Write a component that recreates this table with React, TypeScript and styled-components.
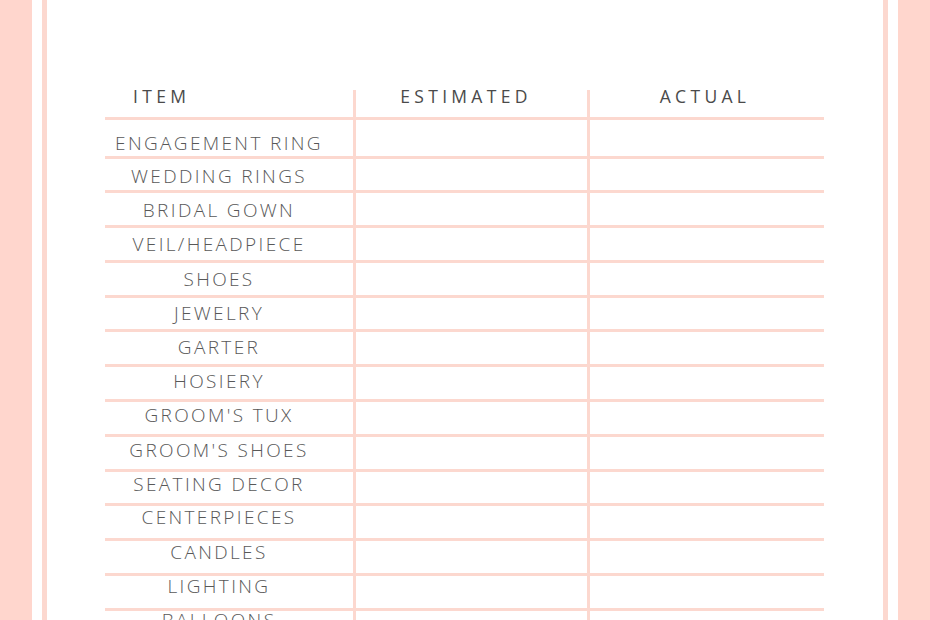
import React from "react";
import styled, { createGlobalStyle } from "styled-components";

const PINK = "#ffd6cd";
const LINE = "#fcd8cf";

const Global = createGlobalStyle`
  html, body {
    margin: 0;
    padding: 0;
    background: #ffffff;
    width: 930px;
    height: 620px;
    overflow: hidden;
  }
`;

const Page = styled.div`
  display: flex;
  width: 930px;
  height: 620px;
  background: #ffffff;
`;

const Band = styled.div`
  width: 32px;
  flex: 0 0 32px;
  background: ${PINK};
`;

const Gap = styled.div`
  width: 10px;
  flex: 0 0 10px;
`;

const FrameLine = styled.div`
  width: 5px;
  flex: 0 0 5px;
  background: ${LINE};
`;

const Content = styled.div`
  flex: 1;
  padding: 90px 0 0 58px;
  overflow: hidden;
`;

const Table = styled.div`
  width: 719px;
  display: flex;
  flex-direction: column;
`;

const Row = styled.div<{ $h: number }>`
  display: grid;
  grid-template-columns: 248px 234px 237px;
  height: ${(p) => p.$h}px;
  border-bottom: 3px solid ${LINE};
  flex: 0 0 auto;
`;

const HeadCell = styled.div<{ $first?: boolean; $shift?: number }>`
  font-family: "Open Sans", "Liberation Sans", sans-serif;
  font-weight: 400;
  font-size: 17.5px;
  letter-spacing: 4.3px;
  line-height: 12px;
  color: #4a4a4a;
  text-align: ${(p) => (p.$first ? "left" : "center")};
  padding-left: ${(p) => (p.$first ? "28px" : "0")};
  padding-right: ${(p) => (p.$shift ? `${p.$shift}px` : "0")};
  border-left: ${(p) => (p.$first ? "none" : `3px solid ${LINE}`)};
  white-space: nowrap;
`;

const ItemCell = styled.div<{ $dy: number }>`
  display: flex;
  align-items: center;
  justify-content: center;
  padding-right: 20px;
  font-family: "Open Sans", "Liberation Sans", sans-serif;
  font-weight: 300;
  font-size: 19px;
  letter-spacing: 2.35px;
  color: #585858;
  white-space: nowrap;
  transform: translateY(${(p) => p.$dy}px);
`;

const BlankCell = styled.div`
  border-left: 3px solid ${LINE};
`;

const items = [
  "ENGAGEMENT RING",
  "WEDDING RINGS",
  "BRIDAL GOWN",
  "VEIL/HEADPIECE",
  "SHOES",
  "JEWELRY",
  "GARTER",
  "HOSIERY",
  "GROOM'S TUX",
  "GROOM'S SHOES",
  "SEATING DECOR",
  "CENTERPIECES",
  "CANDLES",
  "LIGHTING",
  "BALLOONS",
];

const FIRST_H = 36;
const ROW_H = 31.8;
const BORDER = 3;
const HEAD_BOTTOM = 90 + 26.5 + BORDER;

function rowCenter(i: number): number {
  if (i === 0) return HEAD_BOTTOM + FIRST_H / 2;
  const start = HEAD_BOTTOM + FIRST_H + BORDER + (i - 1) * (ROW_H + BORDER);
  return start + ROW_H / 2;
}

function textOffset(i: number): number {
  const target = 142 + i * 34.15;
  return target - rowCenter(i);
}

export default function App() {
  return (
    <>
      <Global />
      <Page>
        <Band />
        <Gap />
        <FrameLine />
        <Content>
          <Table>
            <Row $h={26.5}>
              <HeadCell $first>ITEM</HeadCell>
              <HeadCell $shift={11}>ESTIMATED</HeadCell>
              <HeadCell $shift={4}>ACTUAL</HeadCell>
            </Row>
            {items.map((it, i) => (
              <Row key={it} $h={i === 0 ? FIRST_H : ROW_H}>
                <ItemCell $dy={textOffset(i)}>{it}</ItemCell>
                <BlankCell />
                <BlankCell />
              </Row>
            ))}
          </Table>
        </Content>
        <FrameLine />
        <Gap />
        <Band />
      </Page>
    </>
  );
}
